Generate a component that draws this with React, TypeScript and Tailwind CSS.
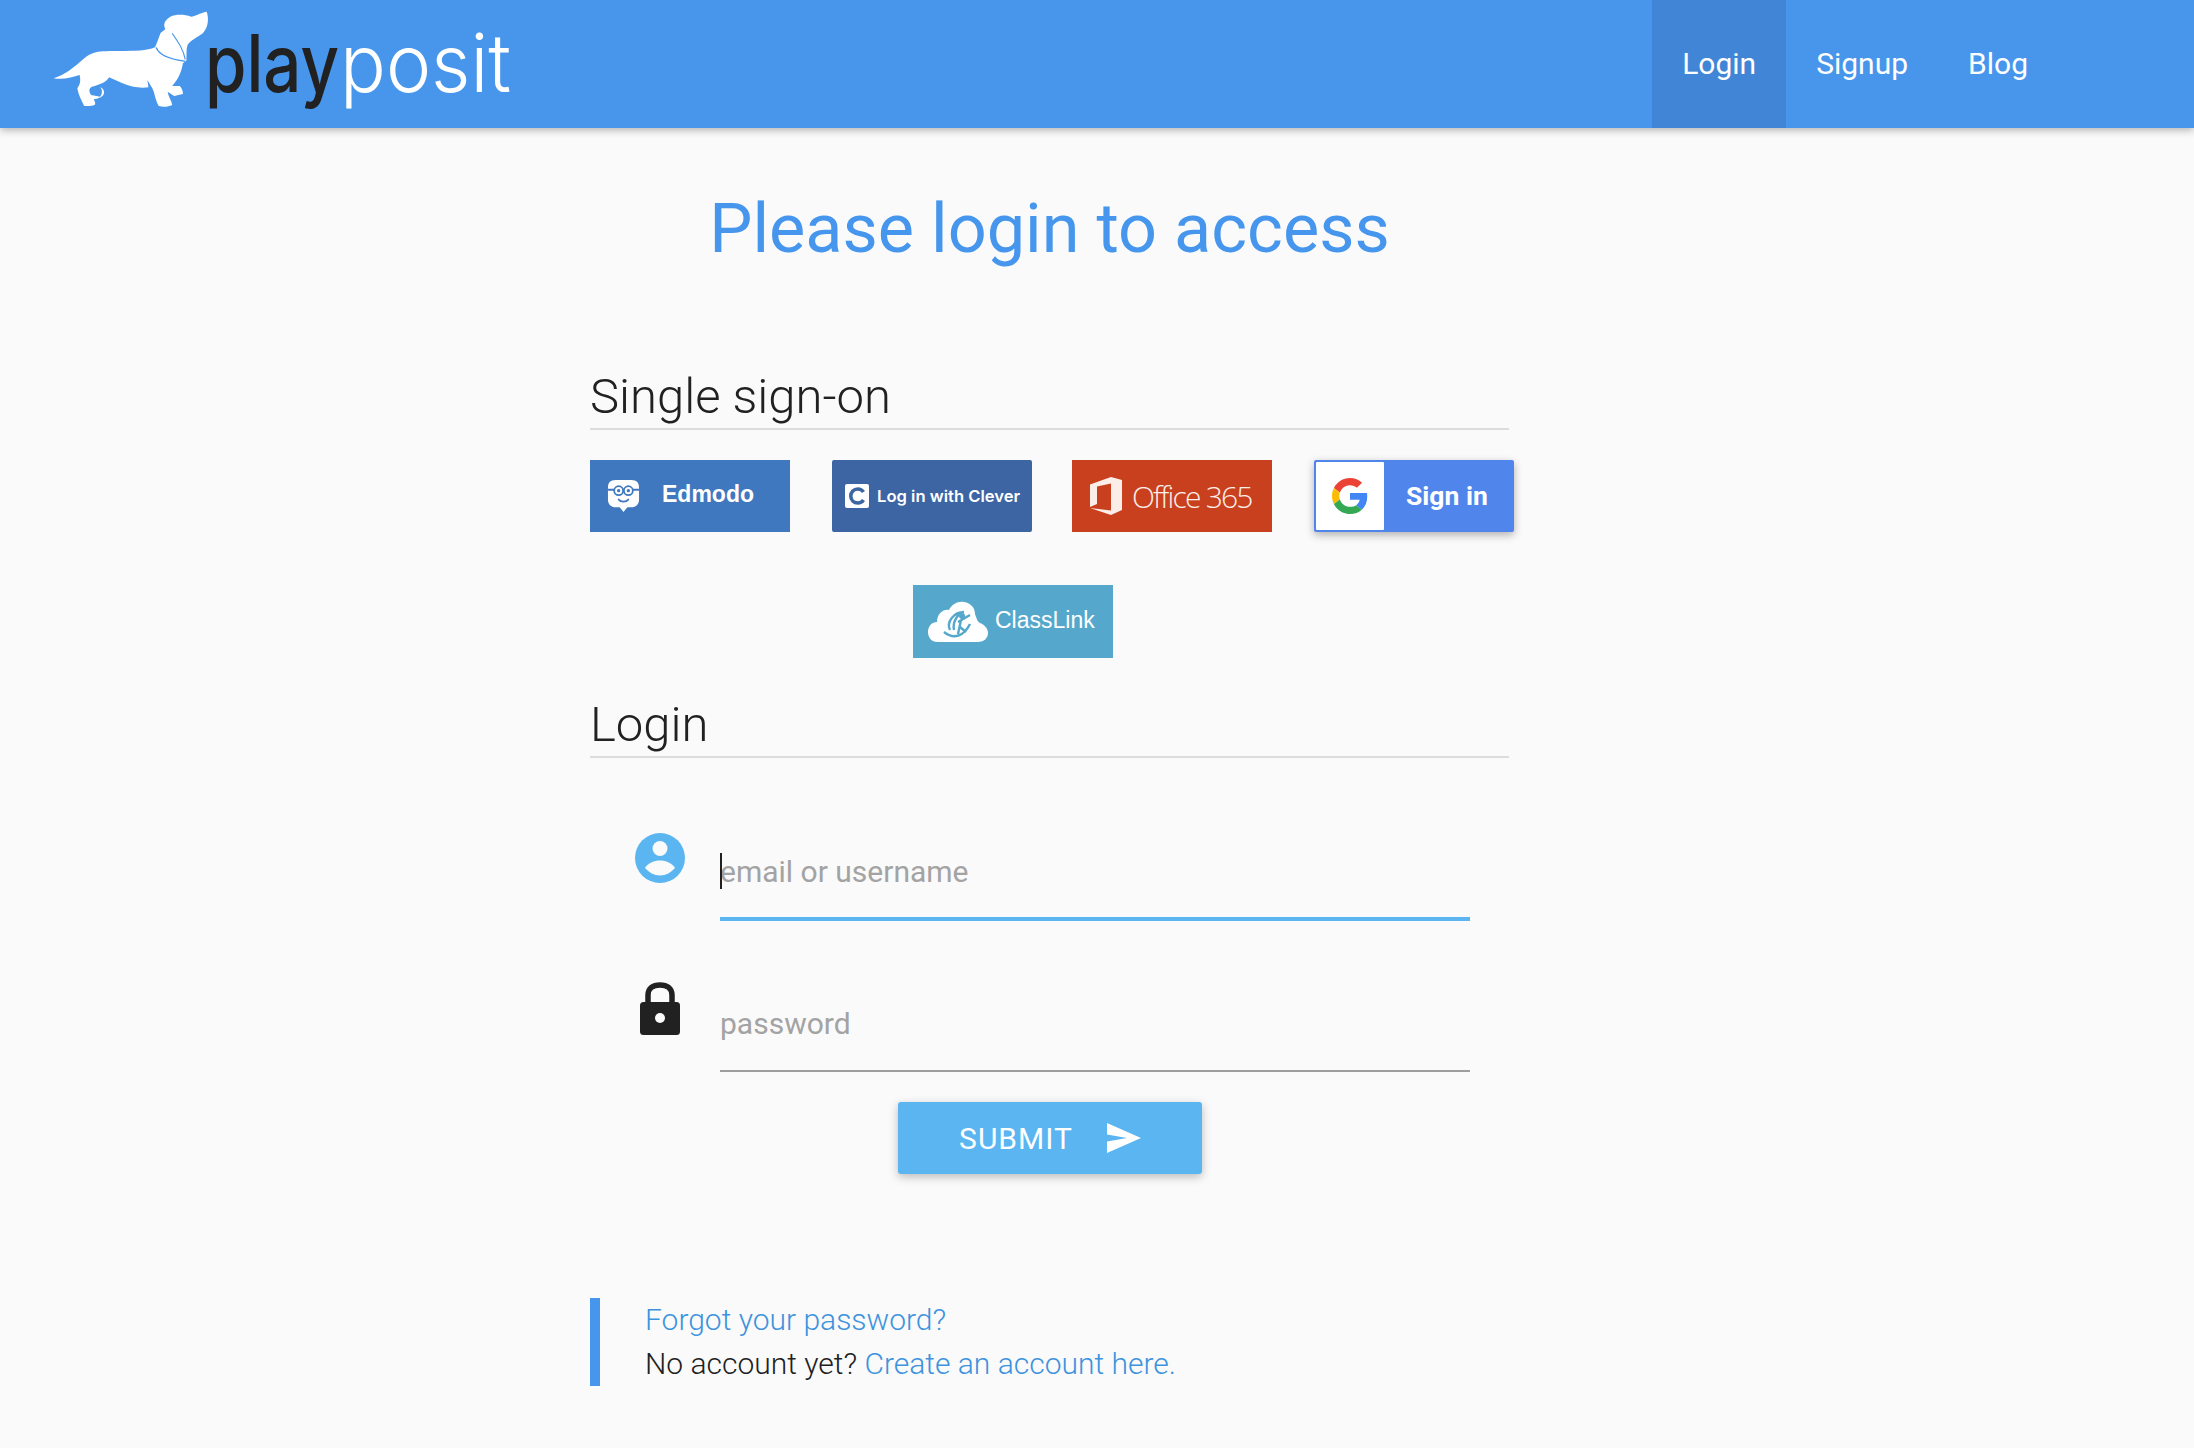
import React from "react";

function Logo() {
  return (
    <svg viewBox="0 0 600 128" className="w-[600px] h-[128px] shrink-0">
      <g transform="scale(0.3827,0.3333)">
        <path
          fill="#fff"
          d="M140 235 C170 225 195 200 215 180 C232 163 245 156 270 154 C310 151 375 158 405 142 C412 125 415 110 420 98 L432 88 C425 70 432 60 445 50 C460 42 480 42 500 50 C515 46 530 36 540 35 C546 55 545 80 530 100 C515 112 498 122 490 135 C486 150 488 165 487 182 L478 190 C474 215 468 235 450 258 L470 258 C476 265 478 275 478 282 L455 288 L438 275 C440 290 448 300 450 315 C440 321 425 322 415 318 C405 300 405 280 398 265 L385 240 L388 262 C365 266 340 260 320 250 L285 232 C280 245 260 255 240 260 C232 265 232 275 238 285 L262 290 C268 280 268 270 262 262 C270 265 275 275 270 285 C262 296 250 296 245 298 C248 305 250 310 248 314 C240 318 230 319 220 318 C212 300 205 285 202 265 C208 255 212 245 208 225 C190 232 165 240 140 235 Z"
        />
        <path d="M408 142 C415 165 445 178 485 184" fill="none" stroke="#4796ec" strokeWidth="4" />
        <path d="M450 100 C465 125 478 145 484 178" fill="none" stroke="#4796ec" strokeWidth="3" />
      </g>
      <text
        x="205"
        y="92"
        fontSize="80"
        textLength="134"
        lengthAdjust="spacingAndGlyphs"
        fill="#212121"
        className="font-['Inter',sans-serif] font-medium"
      >
        play
      </text>
      <text
        x="340"
        y="92"
        fontSize="80"
        textLength="171"
        lengthAdjust="spacingAndGlyphs"
        fill="#fff"
        className="font-['Inter',sans-serif] font-light"
      >
        posit
      </text>
    </svg>
  );
}

function EdmodoIcon() {
  return (
    <svg viewBox="0 0 34 36" className="w-[33px] h-[35px] shrink-0">
      <path fill="#fff" d="M9 1 H25 C31 1 33 4 33 9 V21 C33 26 30 29 25 29 H21 L17 34 L13 29 H9 C4 29 1 26 1 21 V9 C1 4 3 1 9 1 Z" />
      <path d="M1 11 H33" stroke="#3f78bf" strokeWidth="2" />
      <circle cx="12" cy="12" r="4.6" fill="#fff" stroke="#3f78bf" strokeWidth="1.8" />
      <circle cx="22" cy="12" r="4.6" fill="#fff" stroke="#3f78bf" strokeWidth="1.8" />
      <circle cx="12" cy="12" r="1.7" fill="#3f78bf" />
      <circle cx="22" cy="12" r="1.7" fill="#3f78bf" />
      <path d="M12 21 C14 24 20 24 22 21" fill="none" stroke="#3f78bf" strokeWidth="1.8" strokeLinecap="round" />
    </svg>
  );
}

function CleverIcon() {
  return (
    <svg viewBox="0 0 24 24" className="w-[24px] h-[24px] shrink-0">
      <rect width="24" height="24" rx="2" fill="#fff" />
      <path d="M18.5 8 C17 5.8 15 5 12.8 5 C8.8 5 5.8 8 5.8 12 C5.8 16 8.8 19 12.8 19 C15 19 17 18.2 18.5 16" fill="none" stroke="#3d65a3" strokeWidth="3.6" />
    </svg>
  );
}

function OfficeIcon() {
  return (
    <svg viewBox="0 0 32 38" className="w-[32px] h-[38px] shrink-0">
      <path fill="#fbeee9" d="M0 7.5 L21 0 L32 3 V33 L21 38 L0 31 L21 33.5 V6.5 L7 9.5 V27 L0 30 Z" />
    </svg>
  );
}

function GoogleIcon() {
  return (
    <svg viewBox="0 0 48 48" className="w-[36px] h-[36px]">
      <path fill="#EA4335" d="M24 9.5c3.54 0 6.71 1.22 9.21 3.6l6.85-6.85C35.9 2.38 30.47 0 24 0 14.62 0 6.51 5.38 2.56 13.22l7.98 6.19C12.43 13.72 17.74 9.5 24 9.5z" />
      <path fill="#4285F4" d="M46.98 24.55c0-1.57-.15-3.09-.38-4.55H24v9.02h12.94c-.58 2.96-2.26 5.48-4.78 7.18l7.73 6c4.51-4.18 7.09-10.36 7.09-17.65z" />
      <path fill="#FBBC05" d="M10.53 28.59c-.48-1.45-.76-2.99-.76-4.59s.27-3.14.76-4.59l-7.98-6.19C.92 16.46 0 20.12 0 24c0 3.88.92 7.54 2.56 10.78l7.97-6.19z" />
      <path fill="#34A853" d="M24 48c6.48 0 11.93-2.13 15.89-5.81l-7.73-6c-2.15 1.45-4.92 2.3-8.16 2.3-6.26 0-11.57-4.22-13.47-9.91l-7.98 6.19C6.51 42.62 14.62 48 24 48z" />
    </svg>
  );
}

function ClassLinkIcon() {
  return (
    <svg viewBox="0 0 60 44" className="w-[60px] h-[44px] shrink-0">
      <path fill="#fff" d="M10 42 C3 42 0 37 0 32 C0 26 4 22 9 22 C9 14 15 9 21 10 C24 4 30 1 36 2 C43 3 47 8 47 14 C49 20 50 22 52 23 C57 25 60 29 60 33 C60 38 56 42 50 42 Z" />
      <path d="M22 30 C18 22 26 12 36 12 C32 12 24 20 26 30 M16 32 C26 40 36 36 42 24" fill="none" stroke="#55a8cc" strokeWidth="2.4" />
      <circle cx="34" cy="16" r="3" fill="#55a8cc" />
      <path d="M30 22 L42 15 M33 20 L30 34 M32 27 L38 32" stroke="#55a8cc" strokeWidth="2.4" fill="none" />
    </svg>
  );
}

function UserIcon() {
  return (
    <svg viewBox="0 0 50 50" className="w-[50px] h-[50px]">
      <circle cx="25" cy="25" r="25" fill="#5ab5f1" />
      <circle cx="25" cy="15.5" r="7.5" fill="#fafafa" />
      <path fill="#fafafa" d="M10 35 C13 30 19 27.5 25 27.5 C31 27.5 37 30 40 35 C36 39.5 31 42.5 25 42.5 C19 42.5 14 39.5 10 35 Z" />
    </svg>
  );
}

function LockIcon() {
  return (
    <svg viewBox="0 0 40 53" className="w-[40px] h-[53px]">
      <path d="M8 22 V13 C8 6 13 3 20 3 C27 3 32 6 32 13 V22" fill="none" stroke="#212121" strokeWidth="5.5" />
      <rect x="0" y="20" width="40" height="33" rx="3.5" fill="#212121" />
      <circle cx="20" cy="36" r="5" fill="#fafafa" />
    </svg>
  );
}

function SectionTitle({ children }: { children: React.ReactNode }) {
  return (
    <h2 className="h-[66px] border-b-2 border-[#dcdcdc] text-[49px] leading-[66px] font-light text-[#212121]">
      {children}
    </h2>
  );
}

export default function App() {
  return (
    <div className="min-h-screen bg-[#fafafa] font-['Roboto',sans-serif] text-[#212121]">
      <header className="relative h-[128px] bg-[#4796ec] shadow-[0_2px_8px_rgba(0,0,0,0.3)] flex justify-between">
        <Logo />
        <nav className="flex mr-[136px] text-[30px] text-white">
          <a className="px-[30px] pb-[2px] flex items-center bg-[#4186d6]">Login</a>
          <a className="px-[30px] pb-[2px] flex items-center">Signup</a>
          <a className="px-[30px] pb-[2px] flex items-center">Blog</a>
        </nav>
      </header>

      <main className="ml-[590px] w-[919px] pt-[49px]">
        <h1 className="text-[68.4px] leading-[104px] text-center text-[#4596ec]">Please login to access</h1>

        <div className="mt-[83px]">
          <SectionTitle>Single sign-on</SectionTitle>
        </div>

        <div className="mt-[30px] flex gap-[42px] w-[924px]">
          <div className="w-[200px] h-[72px] bg-[#3f78bf] flex items-center pl-[17px] gap-[22px] text-white text-[23px] font-bold font-['Liberation_Sans',sans-serif] shrink-0">
            <EdmodoIcon />
            <span className="-mt-[3px]">Edmodo</span>
          </div>
          <div className="w-[200px] h-[72px] bg-[#3d65a3] rounded-[2px] flex items-center pl-[13px] gap-[8px] text-white text-[16.6px] font-semibold font-['Inter',sans-serif] shrink-0">
            <CleverIcon />
            <span>Log in with Clever</span>
          </div>
          <div className="-ml-[2px] w-[200px] h-[72px] bg-[#c8401e] flex items-center pl-[18px] gap-[10px] text-[#fbeee9] text-[30px] font-light font-['Open_Sans',sans-serif] tracking-[-1.8px] shrink-0">
            <OfficeIcon />
            <span>Office 365</span>
          </div>
          <div className="w-[200px] h-[72px] bg-[#5086ec] rounded-[2px] flex items-center p-[2px] text-white text-[26.5px] font-bold shadow-[0_3px_8px_rgba(0,0,0,0.3)] shrink-0">
            <div className="w-[68px] h-[68px] bg-white rounded-[1px] flex items-center justify-center">
              <GoogleIcon />
            </div>
            <span className="ml-[22px]">Sign in</span>
          </div>
        </div>

        <div className="mt-[53px] ml-[323px] w-[200px] h-[73px] bg-[#55a8cc] flex items-center pl-[15px] gap-[7px] text-white text-[23px] font-['Liberation_Sans',sans-serif]">
          <ClassLinkIcon />
          <span className="-mt-[3px]">ClassLink</span>
        </div>

        <div className="mt-[34px]">
          <SectionTitle>Login</SectionTitle>
        </div>

        <div className="mt-[13px] flex pl-[45px] h-[151px]">
          <div className="w-[50px] mt-[62px] mr-[35px]">
            <UserIcon />
          </div>
          <div className="relative mt-[50px] w-[750px]">
            <input
              placeholder="email or username"
              className="w-full h-[100px] box-border pt-[4px] border-b-4 border-[#5ab5f1] bg-transparent outline-none text-[30px] placeholder:text-[#a3a3a3]"
            />
            <div className="absolute left-0 top-[32px] w-[2px] h-[36px] bg-[#212121]" />
          </div>
        </div>

        <div className="flex pl-[45px] h-[150px]">
          <div className="w-[50px] mt-[60px] mr-[35px] flex justify-center">
            <LockIcon />
          </div>
          <input
            type="password"
            placeholder="password"
            className="mt-[50px] w-[750px] h-[100px] box-border pt-[4px] border-b-2 border-[#9e9e9e] bg-transparent outline-none text-[30px] placeholder:text-[#a3a3a3]"
          />
        </div>

        <button className="mt-[30px] ml-[308px] w-[304px] h-[72px] bg-[#5ab5f1] rounded-[3px] flex items-center justify-center gap-[34px] text-white text-[30px] tracking-[1px] shadow-[0_3px_10px_rgba(0,0,0,0.25)]">
          <span>SUBMIT</span>
          <svg viewBox="0 0 34 30" className="w-[34px] h-[30px]">
            <path fill="#fff" d="M0 0 L34 15 L0 30 V18.5 L20 15 L0 11.5 Z" />
          </svg>
        </button>

        <div className="mt-[124px] h-[88px] border-l-[10px] border-[#4596ec] pl-[45px] text-[30px] font-light leading-[44px]">
          <a className="block text-[#3d93dd]">Forgot your password?</a>
          <p>
            No account yet? <a className="text-[#3d93dd]">Create an account here.</a>
          </p>
        </div>
      </main>
    </div>
  );
}
